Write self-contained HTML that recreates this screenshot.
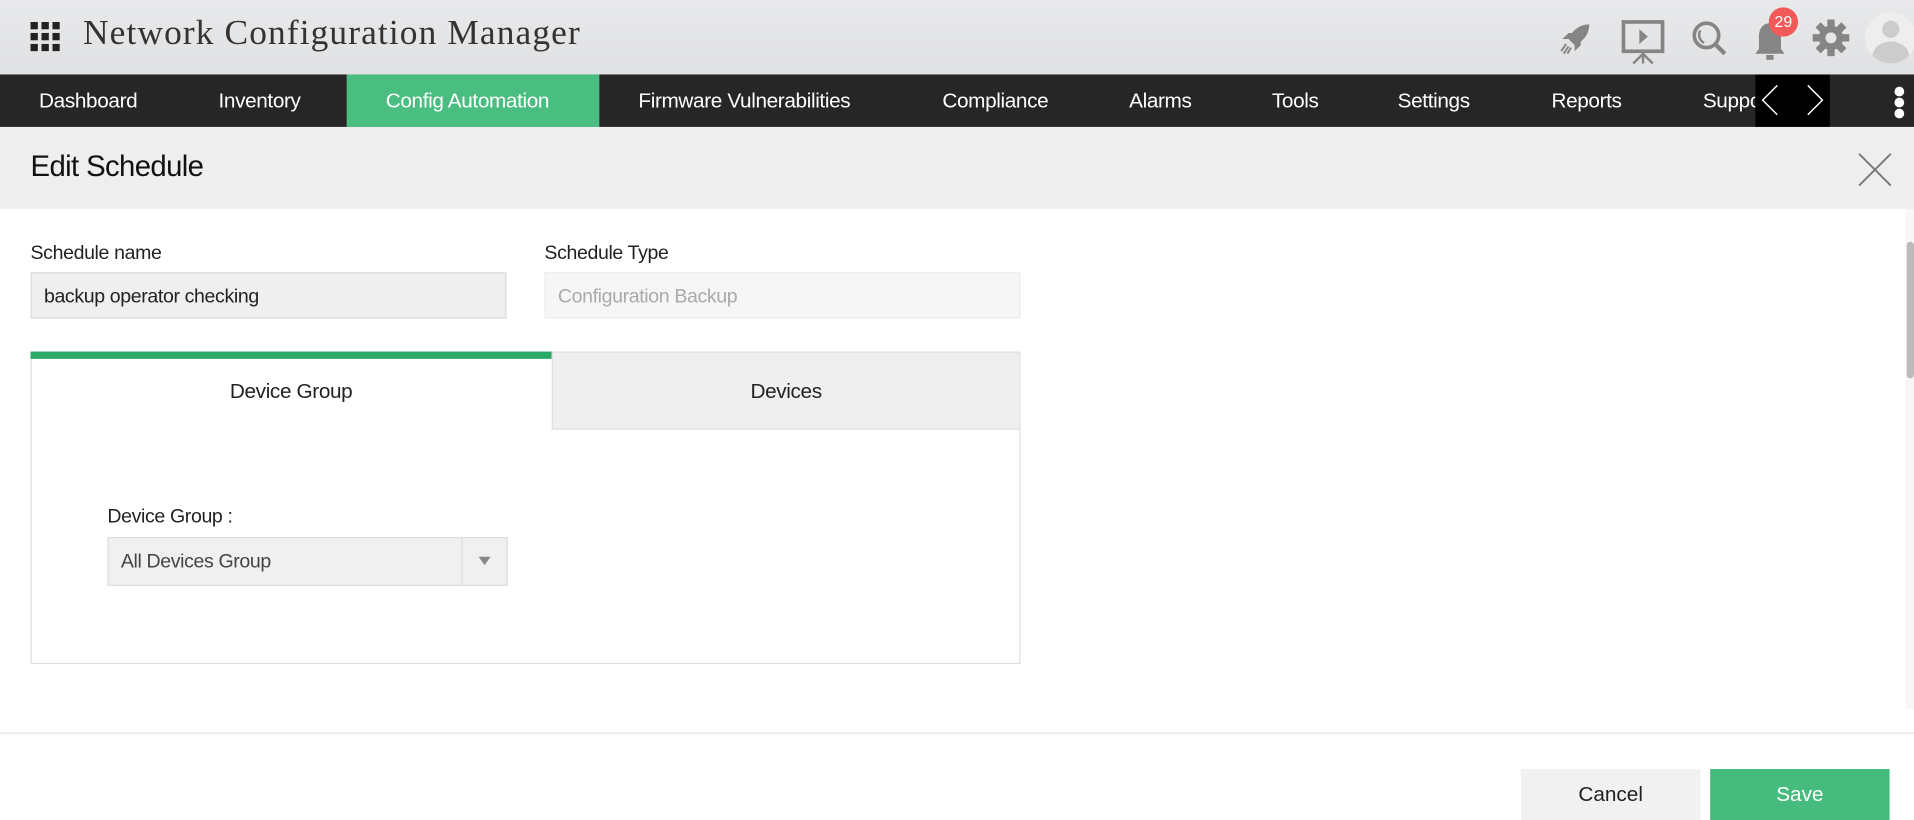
<!DOCTYPE html>
<html><head><meta charset="utf-8"><style>
html,body{margin:0;padding:0;width:1914px;height:808px;overflow:hidden;background:#fff}
#w{position:absolute;left:0;top:0;width:1568px;height:662px;transform:scale(1.22066);transform-origin:0 0;font-family:"Liberation Sans",sans-serif;color:#222}
.a{position:absolute}
.hdr{left:0;top:0;width:1568px;height:61px;background:linear-gradient(#e8e9eb,#e0e1e3)}
.title{left:68px;top:11px;font-family:"Liberation Serif","DejaVu Serif",serif;font-size:29px;color:#333;letter-spacing:0.9px}
.nav{left:0;top:61px;width:1568px;height:43px;background:#262626;overflow:hidden}
.nav span{position:absolute;top:12px;font-size:17px;color:#fff;letter-spacing:-0.3px;white-space:nowrap}
.tb{left:0;top:104px;width:1568px;height:67px;background:#eeeeee}
.lbl{font-size:16px;color:#222;letter-spacing:-0.3px}
.inp{height:38px;border:1px solid #dcdcdc;box-sizing:border-box;font-size:16px;line-height:40px;padding-left:10px;letter-spacing:-0.3px}
</style></head><body><div id="w">
<div class="a hdr"></div>
<svg class="a" style="left:25px;top:18px" width="24" height="24"><g fill="#222"><rect x="0" y="0" width="6" height="6"/><rect x="9" y="0" width="6" height="6"/><rect x="18" y="0" width="6" height="6"/><rect x="0" y="9" width="6" height="6"/><rect x="9" y="9" width="6" height="6"/><rect x="18" y="9" width="6" height="6"/><rect x="0" y="18" width="6" height="6"/><rect x="9" y="18" width="6" height="6"/><rect x="18" y="18" width="6" height="6"/></g></svg>
<div class="a title">Network Configuration Manager</div>
<svg class="a" style="left:1276px;top:16px" width="30" height="30" viewBox="0 0 30 30"><path d="M26 4 C18 4 12 9 9 16 L14 21 C21 18 26 12 26 4Z" fill="#858585"/><path d="M9 16 L4 16 L9 11 L13 11Z M14 21 L14 26 L19 21 L19 17Z" fill="#858585"/><path d="M7 20 L3 26 M9 22 L5 28 M11 23 L8 28" stroke="#858585" stroke-width="1.6"/></svg>
<svg class="a" style="left:1328px;top:16px" width="36" height="40" viewBox="0 0 36 40"><rect x="2" y="2" width="32" height="24" fill="none" stroke="#858585" stroke-width="3"/><path d="M15 8 L22 14 L15 20Z" fill="#858585"/><path d="M18 26 V36 M18 28 L10 36 M18 28 L26 36" stroke="#858585" stroke-width="2"/></svg>
<svg class="a" style="left:1385px;top:16px" width="32" height="32" viewBox="0 0 32 32"><circle cx="13" cy="13" r="10" fill="none" stroke="#858585" stroke-width="3"/><path d="M8 9 A7 7 0 0 0 11 19" fill="none" stroke="#858585" stroke-width="2"/><path d="M20 20 L28 28" stroke="#858585" stroke-width="3.5"/></svg>
<svg class="a" style="left:1436px;top:16px" width="28" height="36" viewBox="0 0 28 36"><path d="M14 3 C7 3 5 9 5 14 L5 24 L2 28 L26 28 L23 24 L23 14 C23 9 21 3 14 3Z" fill="#858585"/><rect x="11" y="29" width="6" height="4" fill="#858585"/></svg>
<div class="a" style="left:1449px;top:6px;width:24px;height:24px;border-radius:50%;background:#f25a5a;color:#fff;font-size:13px;line-height:24px;text-align:center">29</div>
<svg class="a" style="left:1484px;top:15px" width="32" height="32" viewBox="0 0 32 32"><g fill="#858585"><circle cx="16" cy="16" r="10"/><g transform="translate(16 16)"><rect x="-3" y="-15" width="6" height="30"/><rect x="-3" y="-15" width="6" height="30" transform="rotate(45)"/><rect x="-3" y="-15" width="6" height="30" transform="rotate(90)"/><rect x="-3" y="-15" width="6" height="30" transform="rotate(135)"/></g></g><circle cx="16" cy="16" r="4.5" fill="#e4e5e7"/></svg>
<div class="a" style="left:1528px;top:10px;width:42px;height:42px;border-radius:50%;background:#eeeeee;overflow:hidden"><div class="a" style="left:14px;top:7px;width:14px;height:14px;border-radius:50%;background:#ccc"></div><div class="a" style="left:6px;top:24px;width:30px;height:24px;border-radius:50% 50% 0 0;background:#ccc"></div></div>
<div class="a nav">
<div class="a" style="left:284px;top:0;width:207px;height:43px;background:#4abd80"></div>
<span style="left:32px">Dashboard</span><span style="left:179px">Inventory</span><span style="left:316px">Config Automation</span><span style="left:523px">Firmware Vulnerabilities</span><span style="left:772px">Compliance</span><span style="left:925px">Alarms</span><span style="left:1042px">Tools</span><span style="left:1145px">Settings</span><span style="left:1271px">Reports</span><span style="left:1395px">Support</span>
<div class="a" style="left:1438px;top:0;width:61px;height:43px;background:#000"></div>
<svg class="a" style="left:1438px;top:0" width="61" height="43"><path d="M18 9 L6 21 L18 33 M43 9 L55 21 L43 33" fill="none" stroke="#fff" stroke-width="1.2"/></svg>
<div class="a" style="left:1552px;top:10px;width:8px;height:8px;border-radius:50%;background:#fff"></div><div class="a" style="left:1552px;top:19px;width:8px;height:8px;border-radius:50%;background:#fff"></div><div class="a" style="left:1552px;top:28px;width:8px;height:8px;border-radius:50%;background:#fff"></div>
</div>
<div class="a tb"></div>
<div class="a" style="left:25px;top:123px;font-size:24px;color:#111;letter-spacing:-0.5px">Edit Schedule</div>
<svg class="a" style="left:1522px;top:125px" width="28" height="28"><path d="M1 1 L27 27 M27 1 L1 27" stroke="#777" stroke-width="1.5"/></svg>
<div class="a lbl" style="left:25px;top:199px">Schedule name</div>
<div class="a lbl" style="left:446px;top:199px">Schedule Type</div>
<div class="a inp" style="left:25px;top:223px;width:390px;background:#efefef;color:#222">backup operator checking</div>
<div class="a inp" style="left:446px;top:223px;width:390px;background:#f6f6f6;color:#aaa;border-color:#ececec">Configuration Backup</div>
<div class="a" style="left:25px;top:288px;width:811px;height:256px;border:1px solid #e0e0e0;box-sizing:border-box"></div>
<div class="a" style="left:25px;top:288px;width:427px;height:6px;background:#2aaa66"></div>
<div class="a" style="left:452px;top:288px;width:384px;height:64px;background:#efefef;border:1px solid #e0e0e0;box-sizing:border-box"></div>
<div class="a lbl" style="left:25px;top:311px;width:427px;text-align:center;font-size:17px">Device Group</div>
<div class="a lbl" style="left:452px;top:311px;width:384px;text-align:center;font-size:17px">Devices</div>
<div class="a lbl" style="left:88px;top:415px">Device Group :</div>
<div class="a inp" style="left:88px;top:440px;width:328px;height:40px;background:#f0f0f0;color:#444">All Devices Group</div>
<div class="a" style="left:378px;top:441px;width:1px;height:38px;background:#ddd"></div>
<svg class="a" style="left:392px;top:456px" width="10" height="8"><path d="M0 0 H10 L5 7Z" fill="#888"/></svg>
<div class="a" style="left:1561px;top:171px;width:7px;height:410px;background:#f7f7f7"></div>
<div class="a" style="left:1562px;top:198px;width:6px;height:112px;background:#bbb;border-radius:3px"></div>
<div class="a" style="left:0;top:600px;width:1568px;height:1px;background:#e3e3e3"></div>
<div class="a" style="left:1246px;top:630px;width:147px;height:42px;background:#f1f1f1;text-align:center;line-height:42px;font-size:17px;color:#222">Cancel</div>
<div class="a" style="left:1401px;top:630px;width:147px;height:42px;background:#46bb7e;text-align:center;line-height:42px;font-size:17px;color:#fff">Save</div>
</div></body></html>
